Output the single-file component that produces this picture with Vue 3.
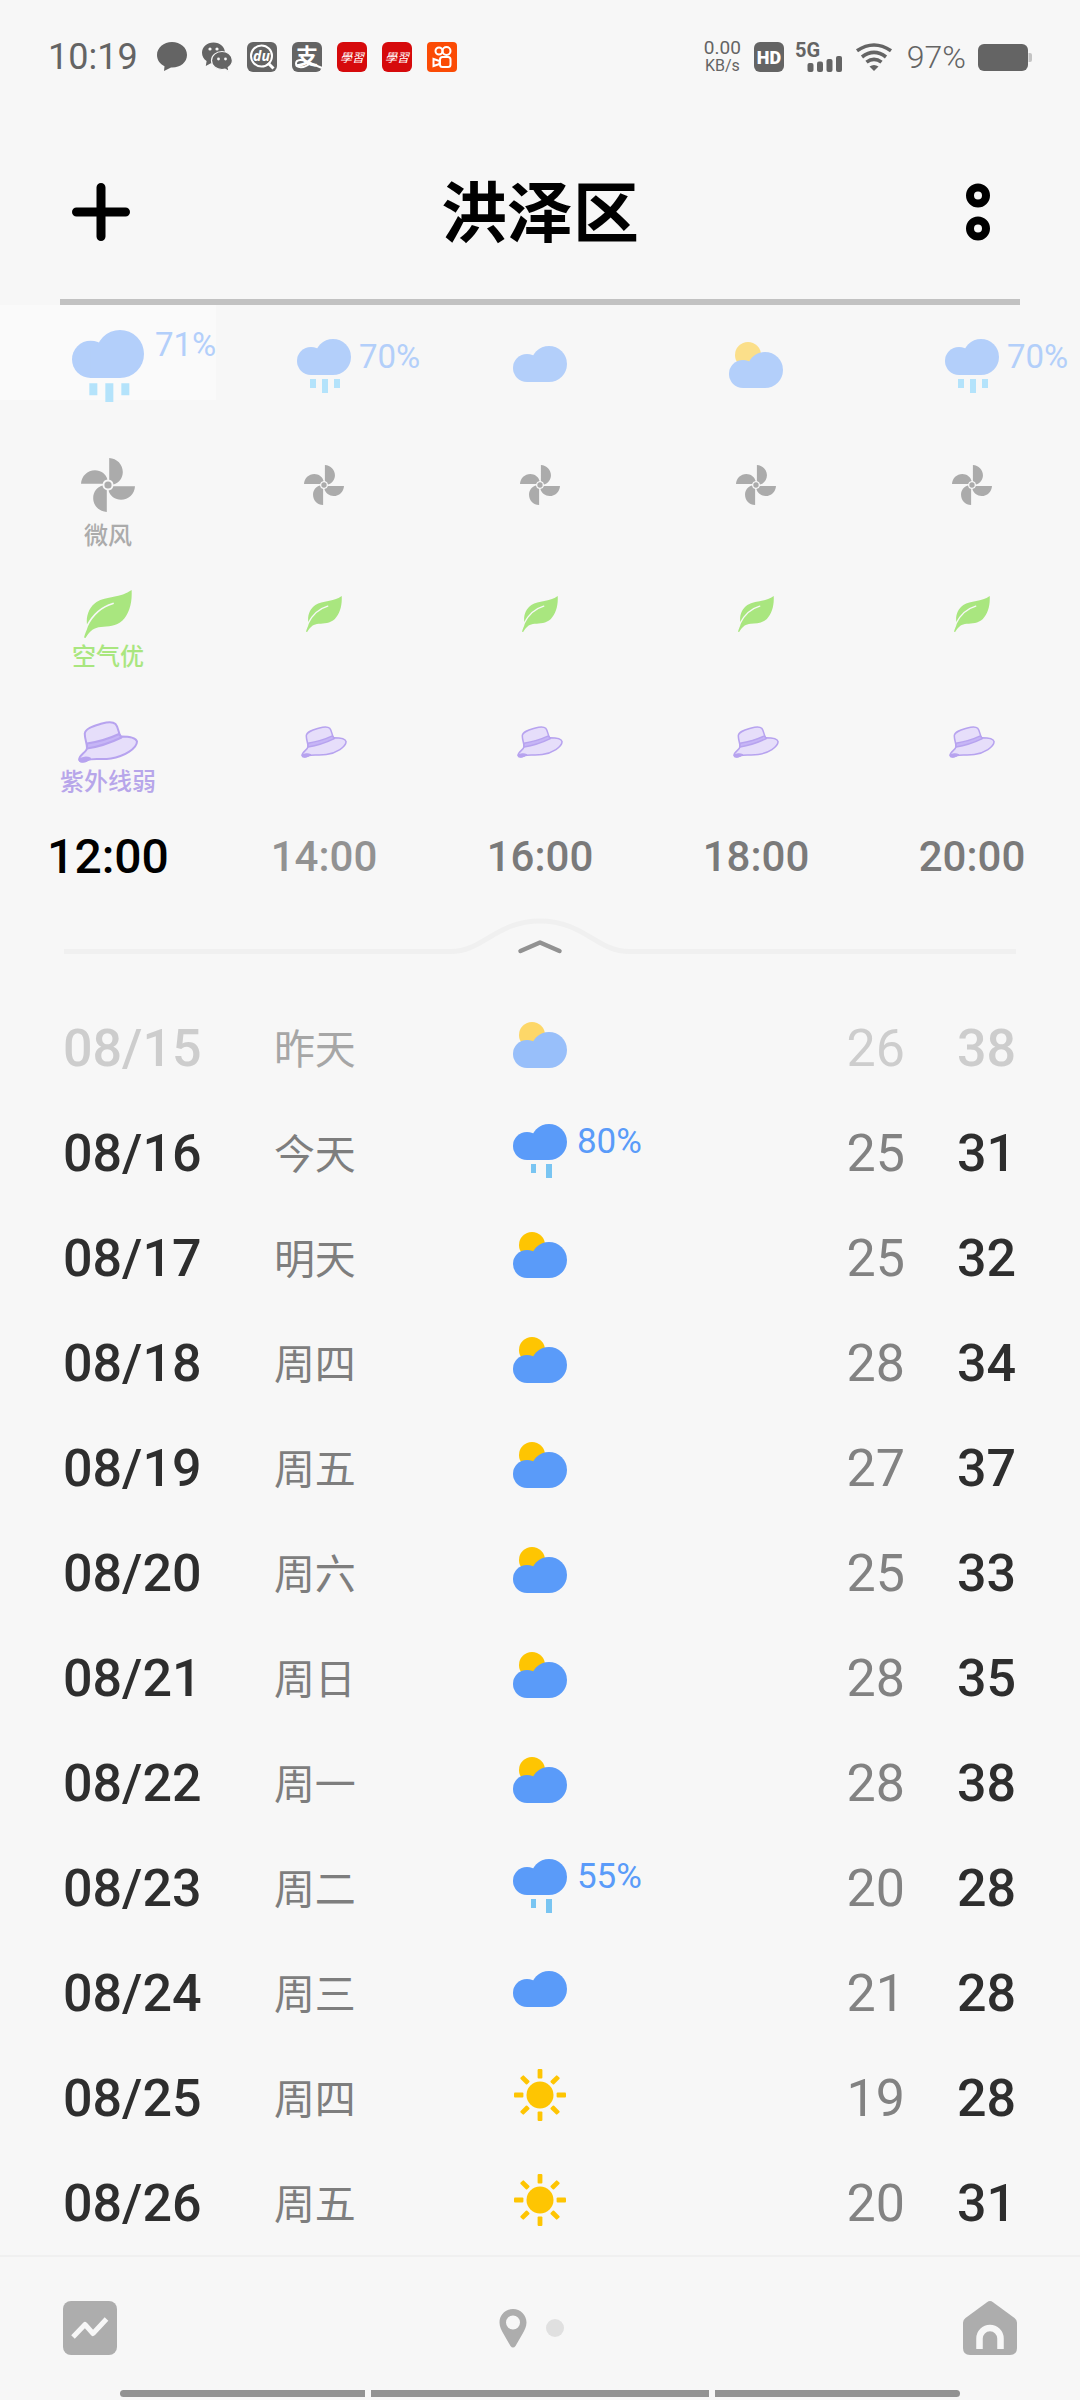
<script setup>
const hours = [
  { time: '12:00', icon: 'rain3', pct: '71%', wind: '微风', air: '空气优', uv: '紫外线弱', active: true },
  { time: '14:00', icon: 'rain3', pct: '70%', fading: true },
  { time: '16:00', icon: 'cloudy' },
  { time: '18:00', icon: 'partly' },
  { time: '20:00', icon: 'rain3', pct: '70%' },
]

const days = [
  { date: '08/15', day: '昨天', icon: 'partly', low: 26, high: 38, past: true },
  { date: '08/16', day: '今天', icon: 'rain2', pct: '80%', low: 25, high: 31 },
  { date: '08/17', day: '明天', icon: 'partly', low: 25, high: 32 },
  { date: '08/18', day: '周四', icon: 'partly', low: 28, high: 34 },
  { date: '08/19', day: '周五', icon: 'partly', low: 27, high: 37 },
  { date: '08/20', day: '周六', icon: 'partly', low: 25, high: 33 },
  { date: '08/21', day: '周日', icon: 'partly', low: 28, high: 35 },
  { date: '08/22', day: '周一', icon: 'partly', low: 28, high: 38 },
  { date: '08/23', day: '周二', icon: 'rain2', pct: '55%', low: 20, high: 28 },
  { date: '08/24', day: '周三', icon: 'cloudy', low: 21, high: 28 },
  { date: '08/25', day: '周四', icon: 'sunny', low: 19, high: 28 },
  { date: '08/26', day: '周五', icon: 'sunny', low: 20, high: 31 },
]

const blades = [0, 90, 180, 270]
const rays = [0, 45, 90, 135, 180, 225, 270, 315]
</script>

<template>
  <div class="screen">
    <svg class="defs" width="0" height="0" aria-hidden="true">
      <symbol id="cloud" viewBox="0 0 54 36">
        <circle cx="14" cy="22" r="14" fill="currentColor" />
        <circle cx="36" cy="18" r="18" fill="currentColor" />
        <rect x="14" y="12" width="22" height="24" fill="currentColor" />
      </symbol>
      <symbol id="cloudy" viewBox="0 0 54 54">
        <use href="#cloud" x="0" y="7" width="54" height="36" />
      </symbol>
      <symbol id="partly" viewBox="0 0 54 54">
        <circle class="sun" cx="19" cy="16" r="13" />
        <use href="#cloud" x="0" y="13" width="54" height="36" />
      </symbol>
      <symbol id="rain3" viewBox="0 0 54 54">
        <use href="#cloud" x="0" y="0" width="54" height="36" />
        <path class="drop" d="M13 40h6v9h-6zM25 40h6v14h-6zM37 40h6v9h-6z" />
      </symbol>
      <symbol id="rain2" viewBox="0 0 54 54">
        <use href="#cloud" x="0" y="0" width="54" height="36" />
        <path class="drop" d="M18 40h5v9h-5zM33 40h6v14h-6z" />
      </symbol>
      <symbol id="sunny" viewBox="0 0 54 54">
        <circle class="sun" cx="27" cy="26" r="13.5" />
        <rect v-for="r in rays" :key="r" class="sun" x="24.6" y="0" width="4.8" height="9.4" rx="1" :transform="`rotate(${r} 27 26)`" />
      </symbol>
      <symbol id="fan" viewBox="0 0 54 54">
        <circle cx="27" cy="27" r="3.6" fill="currentColor" />
        <path v-for="r in blades" :key="r" fill="currentColor" d="M28.2 0C36 .4 41.8 6.5 41.8 14c0 5.800-3.800 11.200-9.300 12.400a5.500 5.500 0 0 0-4.300-4.700z" :transform="`rotate(${r} 27 27)`" />
      </symbol>
      <symbol id="leaf" viewBox="0 0 48 48">
        <path fill="currentColor" d="M47.600 0C48.400 13 45 24 38.500 30.500C32 36.500 24 36.500 17 37C10 37.800 6.500 40 1.500 48L0 47.500C1 43 3 40 3.500 37.500C1 27 5 17 12.500 12C22 6 37 8 47.600 0z" />
        <path d="M29 13.500C17 17 8 26 2.800 36.500" fill="none" stroke="#f7f7f7" stroke-width="1.800" stroke-linecap="round" />
      </symbol>
      <symbol id="hat" viewBox="0 0 60 42">
        <g fill="#e6defa" stroke="#b7a3ef" stroke-width="2" stroke-linejoin="round">
          <path d="M9 27C9 31 1 34 1.200 38.500C1.600 42 7 40.500 9 39.500C14 36.500 22 39 33 37.500C46 35.500 59 27.500 59 20.500C58 16.500 49 15.500 43 15.500z" />
          <path d="M9 27C9 22 6.600 18 6.800 12.500C7.500 7 16 5 24 2.500C30 .8 35 .6 37.500 3C40.500 6 40 12 43 16z" />
          <path d="M9 22.500Q26 20 41 13L43.500 16.500Q26 25 9 27.500z" fill="#c6b5f6" />
          <path d="M1.500 38.500C2 41.500 8 40.500 12 37.500C9 36 4 36.500 1.500 38.500z" fill="#b7a3ef" />
        </g>
      </symbol>
    </svg>

    <div class="status">
      <div class="status-side">
        <span class="clock">10:19</span>
        <div class="apps">
          <svg class="app" viewBox="0 0 30 30"><path fill="#646464" d="M15 0C6.700 0 0 5.700 0 13c0 5 3 9.200 7.500 11.200L7 29l7-3.500c9 .5 16-5 16-12.500S23.300 0 15 0z" /></svg>
          <svg class="app" viewBox="0 0 30 30">
            <path fill="#646464" d="M11.500.5C5 .5 0 5 0 10.800c0 3.600 1.800 6.500 4.600 8.300L3.800 24l5-2.700 4 .5C20 21 23 16 23 10.800 23 5 18 .5 11.500.5z" />
            <path fill="#646464" stroke="#f7f7f7" stroke-width="1.200" d="M20 9.500c-5.800 0-10.500 3.900-10.500 9s4.700 9 10.500 9l3-.4 4 2.300-.8-4c2.600-1.700 4.200-4.100 4.200-6.900 0-5.100-4.600-9-10.400-9z" />
            <g fill="#f7f7f7"><circle cx="8" cy="7" r="1.600" /><circle cx="15" cy="7" r="1.600" /><circle cx="16.500" cy="17" r="1.400" /><circle cx="23.500" cy="17" r="1.400" /></g>
          </svg>
          <svg class="app" viewBox="0 0 30 30">
            <rect width="30" height="30" rx="6" fill="#646464" />
            <circle cx="14.500" cy="14" r="10.500" fill="none" stroke="#fff" stroke-width="2" />
            <path d="M21 21l5.500 5.500" stroke="#fff" stroke-width="3" />
            <text class="du" x="14.500" y="18.500">du</text>
          </svg>
          <svg class="app" viewBox="0 0 30 30">
            <rect width="30" height="30" rx="6" fill="#646464" />
            <text class="zhi" x="15" y="22">支</text>
            <path d="M18 21C12 27 4 26 4 21.500S11 17 17 20.500L30 26" fill="none" stroke="#fff" stroke-width="2" />
          </svg>
          <svg v-for="n in 2" :key="n" class="app" viewBox="0 0 30 30">
            <rect width="30" height="30" rx="6" fill="#d60a0c" />
            <text class="study" x="15" y="19.500">學習</text>
          </svg>
          <svg class="app" viewBox="0 0 30 30">
            <rect width="30" height="30" rx="4" fill="#fb4b05" />
            <g fill="none" stroke="#fff" stroke-width="2"><circle cx="12" cy="9" r="3.500" /><circle cx="19.500" cy="9" r="4" /><rect x="13" y="15" width="10.500" height="10" rx="2.500" /><path d="M6.500 17v7l6-2v-3z" /></g>
          </svg>
        </div>
      </div>
      <div class="status-side">
        <div class="speed"><span>0.00</span><span class="unit">KB/s</span></div>
        <svg class="hd" viewBox="0 0 30 30"><rect width="30" height="30" rx="6" fill="#646464" /><text class="hd-text" x="15" y="21.500">HD</text></svg>
        <svg class="signal" viewBox="0 0 48 30">
          <text class="g5" x="0" y="14.500">5G</text>
          <g fill="#646464"><rect x="12.500" y="21" width="6" height="9" rx="2" /><rect x="22" y="19.500" width="6" height="10.500" rx="2" /><rect x="31.500" y="17" width="6" height="13" rx="2" /><rect x="41" y="14" width="6" height="16" rx="2" /></g>
        </svg>
        <svg class="wifi" viewBox="0 0 36 28">
          <g fill="none" stroke="#646464" stroke-width="3.600"><path d="M1 7.800Q18-3.800 35 7.800" /><path d="M6 14Q18 4.800 30 14" /><path d="M10.500 19.200Q18 13.400 25.500 19.200" /></g>
          <path fill="#646464" d="M13.500 23.500Q18 20.500 22.500 23.500L18 28z" />
        </svg>
        <span class="level">97%</span>
        <svg class="battery" viewBox="0 0 54 27"><rect width="50" height="27" rx="6" fill="#646464" /><path fill="#c4c4c4" d="M50.500 9h1.500q2 0 2 2v5q0 2-2 2h-1.500z" /></svg>
      </div>
    </div>

    <header class="header">
      <button type="button" class="icon-btn" aria-label="添加">
        <svg width="58" height="58" viewBox="0 0 58 58"><path d="M29 4.500v49M4.500 29h49" stroke="#000" stroke-width="9" stroke-linecap="round" /></svg>
      </button>
      <h1>洪泽区</h1>
      <button type="button" class="icon-btn" aria-label="更多">
        <svg width="24" height="58" viewBox="0 0 24 58"><g fill="none" stroke="#000" stroke-width="8"><circle cx="12" cy="12.500" r="8" /><circle cx="12" cy="45.500" r="8" /></g></svg>
      </button>
    </header>
    <div class="rule"></div>

    <ul class="hours">
      <li v-for="h in hours" :key="h.time" :class="['hour', { active: h.active, fading: h.fading }]">
        <div class="sky">
          <div class="sky-row">
            <svg class="weather"><use :href="'#' + h.icon" /></svg>
            <span v-if="h.pct" class="pct">{{ h.pct }}</span>
          </div>
        </div>
        <div class="metric wind">
          <div class="slot"><svg><use href="#fan" /></svg></div>
          <p>{{ h.wind }}</p>
        </div>
        <div class="metric air">
          <div class="slot"><svg><use href="#leaf" /></svg></div>
          <p>{{ h.air }}</p>
        </div>
        <div class="metric uv">
          <div class="slot"><svg><use href="#hat" /></svg></div>
          <p>{{ h.uv }}</p>
        </div>
        <time>{{ h.time }}</time>
      </li>
    </ul>

    <div class="handle">
      <span class="handle-line"></span>
      <button type="button" class="handle-btn" aria-label="收起">
        <svg width="178" height="36" viewBox="0 0 178 36" fill="none">
          <path d="M0 33.500C32 33.500 45 3 89 3S146 33.500 178 33.500" stroke="#f0f0f0" stroke-width="5" />
          <path d="M69.500 33L89 24.500L108.500 33" stroke="#929292" stroke-width="4.500" stroke-linecap="round" stroke-linejoin="round" />
        </svg>
      </button>
      <span class="handle-line"></span>
    </div>

    <table class="days">
      <colgroup><col class="c-date" /><col class="c-day" /><col /><col class="c-temp" /><col class="c-temp" /></colgroup>
      <tbody>
        <tr v-for="d in days" :key="d.date" :class="{ past: d.past }">
          <th scope="row">{{ d.date }}</th>
          <td class="day">{{ d.day }}</td>
          <td>
            <div class="forecast">
              <svg class="weather"><use :href="'#' + d.icon" /></svg>
              <span v-if="d.pct" class="pct">{{ d.pct }}</span>
            </div>
          </td>
          <td class="low">{{ d.low }}</td>
          <td class="high">{{ d.high }}</td>
        </tr>
      </tbody>
    </table>

    <nav class="tabs">
      <button type="button" class="icon-btn" aria-label="趋势">
        <svg width="54" height="54" viewBox="0 0 54 54"><rect width="54" height="54" rx="8" fill="#adadad" /><path d="M10 36L22 23.500L30 32.500L43.500 18" fill="none" stroke="#f7f7f7" stroke-width="5" stroke-linejoin="round" /></svg>
      </button>
      <div class="pager">
        <svg width="28" height="40" viewBox="0 0 28 40"><path fill="#adadad" fill-rule="evenodd" d="M14 1C6.500 1 .5 7 .5 14.500c0 4 2 7.500 3.500 10.500l7.500 13q2.500 3 5 0L24 25c1.500-3 3.500-6.500 3.500-10.500C27.500 7 21.500 1 14 1zm0 6.500a7 7 0 1 1 0 14 7 7 0 0 1 0-14z" /></svg>
        <i class="dot"></i>
      </div>
      <button type="button" class="icon-btn" aria-label="主页">
        <svg width="54" height="54" viewBox="0 0 54 54"><path fill="#adadad" d="M24 1.200q3-2.200 6 0L51.500 17Q54 19 54 21.500V47q0 7-7 7H7q-7 0-7-7V21.500Q0 19 2.500 17z" /><path d="M16.500 48V37.500a10.500 10.500 0 0 1 21 0V48" fill="none" stroke="#f7f7f7" stroke-width="6.500" /></svg>
      </button>
    </nav>
    <div class="gesture"><i></i><i class="mid"></i><i></i></div>
  </div>
</template>

<style>
body {
  margin: 0;
  background: #f7f7f7;
}
</style>

<style scoped>
.screen {
  background: #f7f7f7;
  font-family: Roboto, "Noto Sans CJK SC", sans-serif;
  color: #2e2e2e;
  overflow: hidden;
}
.screen svg {
  display: block;
  flex: none;
}
.defs {
  position: absolute;
}
.icon-btn,
.handle-btn {
  border: 0;
  padding: 0;
  background: none;
}
.sun {
  fill: var(--sun);
}
.drop {
  fill: var(--drop);
}

/* status bar */
.status {
  display: flex;
  justify-content: space-between;
  align-items: center;
  height: 114px;
  padding: 0 48px;
  color: #646464;
}
.status-side,
.apps {
  display: flex;
  align-items: center;
}
.clock {
  font-size: 36px;
  margin-right: 19px;
}
.apps {
  gap: 15px;
}
.app,
.hd {
  width: 30px;
  height: 30px;
}
.status-side svg {
  overflow: visible;
}
.du {
  font: italic 700 14px "Open Sans", sans-serif;
  fill: #fff;
  text-anchor: middle;
}
.zhi {
  font: 700 22px "Noto Sans CJK SC", sans-serif;
  fill: #fff;
  text-anchor: middle;
}
.study {
  font: italic 400 12px "Noto Sans CJK SC", sans-serif;
  fill: #fff;
  text-anchor: middle;
}
.hd-text {
  font: 900 18px Roboto, sans-serif;
  fill: #fff;
  text-anchor: middle;
}
.g5 {
  font: 700 20px Roboto, sans-serif;
  fill: #646464;
}
.speed {
  display: flex;
  flex-direction: column;
  align-items: center;
  font-size: 19px;
  line-height: 18px;
  margin-right: 13px;
}
.unit {
  font-size: 16px;
}
.signal {
  width: 48px;
  height: 30px;
  margin: 0 13px 0 11px;
}
.wifi {
  width: 36px;
  height: 28px;
}
.level {
  font-size: 32px;
  font-weight: 300;
  line-height: 32px;
  margin: 0 12px 0 15px;
}
.battery {
  width: 54px;
  height: 27px;
}

/* title bar */
.header {
  display: flex;
  justify-content: space-between;
  align-items: center;
  box-sizing: border-box;
  height: 185px;
  padding: 10px 90px 0 72px;
}
.header .icon-btn {
  flex: 1;
  display: flex;
}
.header .icon-btn:last-child {
  justify-content: flex-end;
}
h1 {
  margin: 0 0 0 18px;
  padding-top: 6px;
  font-size: 66px;
  line-height: 80px;
  font-weight: 700;
  color: #000;
}
.rule {
  height: 6px;
  margin: 0 60px;
  background: #c2c2c2;
}

/* hourly strip */
.hours {
  display: grid;
  grid-template-columns: repeat(5, 1fr);
  margin: 0;
  padding: 0;
  list-style: none;
}
.hour {
  min-width: 0;
  display: flex;
  flex-direction: column;
  align-items: stretch;
  text-align: center;
}
.sky {
  --sun: #fbdf8a;
  --drop: #b4e3fb;
  color: #b3cffa;
  box-sizing: border-box;
  height: 95px;
  padding-top: 27px;
  display: flex;
  flex-direction: column;
  justify-content: center;
}
.sky-row {
  display: grid;
  grid-template-columns: 1fr 54px 1fr;
  column-gap: 8px;
}
.weather {
  width: 54px;
  height: 54px;
}
.sky .weather {
  grid-column: 2;
}
.pct {
  font-size: 33px;
  line-height: 36px;
  text-align: left;
}
.active .sky {
  background: #fafafa;
}
.active .weather {
  width: 72px;
  height: 72px;
}
.active .sky-row {
  grid-template-columns: 1fr 72px 1fr;
  column-gap: 11px;
}
.sky .pct {
  width: 0;
}
.active .pct {
  line-height: 30px;
}
.slot {
  display: flex;
  align-items: center;
  justify-content: center;
}
.metric p {
  margin: 0;
  height: 30px;
  font-family: "Noto Sans CJK SC", sans-serif;
  font-size: 24px;
  line-height: 30px;
  font-weight: 500;
}
.wind {
  margin-top: 58px;
  color: #ababab;
}
.wind .slot {
  height: 54px;
  margin-bottom: 7px;
}
.wind svg {
  width: 40px;
  height: 40px;
}
.active .wind svg {
  width: 54px;
  height: 54px;
}
.air {
  margin-top: 41px;
  color: #a9e67f;
}
.air .slot {
  height: 48px;
  margin-bottom: 2px;
}
.air svg {
  width: 36px;
  height: 36px;
}
.active .air svg {
  width: 48px;
  height: 48px;
}
.uv {
  margin-top: 51px;
  color: #b7a6ea;
}
.uv .slot {
  height: 42px;
  margin-bottom: 2px;
}
.uv svg {
  width: 46px;
  height: 32px;
}
.active .uv svg {
  width: 60px;
  height: 42px;
}
time {
  margin-top: 38px;
  font-size: 42px;
  line-height: 48px;
  font-weight: 500;
  color: #7a7a7a;
}
.fading time {
  color: #929292;
}
.active time {
  font-size: 48px;
  color: #000;
}

/* pull handle */
.handle {
  display: flex;
  align-items: flex-end;
  margin: 37px 64px 41px;
}
.handle-line {
  flex: 1;
  height: 5px;
  background: #f0f0f0;
}

/* daily list */
.days {
  --sun: #fec502;
  --drop: #79c5f2;
  width: calc(100% - 126px);
  margin: 0 64px 0 62px;
  table-layout: fixed;
  border-collapse: collapse;
  font-size: 52px;
  line-height: 60px;
}
.c-date {
  width: 22%;
}
.c-day {
  width: 241px;
}
.c-temp {
  width: 111px;
}
.days tr {
  height: 105px;
}
.days th,
.days td {
  padding: 0;
  text-align: left;
  vertical-align: middle;
}
.days th {
  padding: 3px 0 0 1px;
  font-weight: 500;
}
.days .day {
  padding: 0 0 3px 2px;
  font-family: "Noto Sans CJK SC", sans-serif;
  font-size: 41px;
  color: #7e7e7e;
}
.days .low,
.days .high {
  padding-top: 3px;
  text-align: right;
}
.days .low {
  color: #828282;
}
.days .high {
  font-weight: 500;
}
.forecast {
  display: flex;
  align-items: flex-start;
  gap: 10px;
  padding-bottom: 4px;
  color: #5a9bf9;
}
.forecast .pct {
  font-size: 35px;
}
.past {
  --sun: #fdd768;
}
.past th,
.past .low,
.past .high {
  color: #cdcdcd;
}
.past .day {
  color: #a6a6a6;
}
.past .forecast {
  color: #98bffa;
}

/* bottom bar */
.tabs {
  display: flex;
  justify-content: space-between;
  align-items: center;
  height: 135px;
  box-sizing: border-box;
  padding: 8px 63px 0;
  border-top: 2px solid #f0f0f0;
}
.tabs .pager {
  display: flex;
  align-items: center;
  gap: 19px;
  margin-right: 18px;
}
.dot {
  width: 18px;
  height: 18px;
  border-radius: 50%;
  background: #e0e0e0;
}
.gesture {
  display: flex;
  gap: 6px;
  padding: 0 120px 3px;
}
.gesture i {
  flex: 245;
  height: 7px;
  background: #929292;
}
.gesture .mid {
  flex: 338;
}
.gesture i:first-child {
  border-radius: 4px 0 0 4px;
}
.gesture i:last-child {
  border-radius: 0 4px 4px 0;
}
</style>
